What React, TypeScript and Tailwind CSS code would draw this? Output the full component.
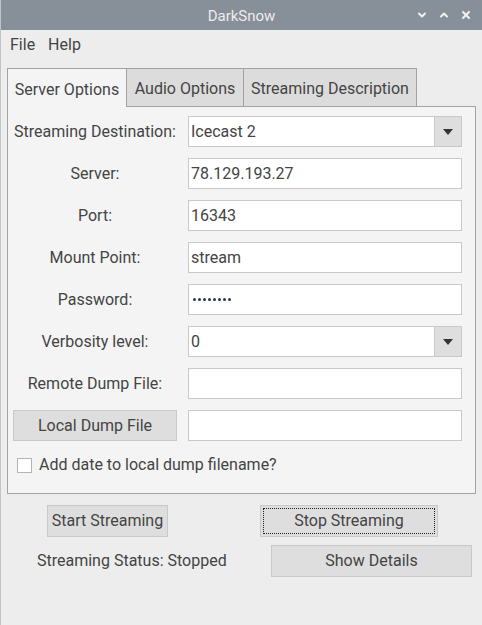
import { ChevronDown, ChevronUp, X } from "lucide-react";

const font = { fontFamily: "Roboto, 'Noto Sans', sans-serif" };

function Field({ label, value, password }: { label: string; value?: string; password?: boolean }) {
  return (
    <div className="flex h-[31px] items-center">
      <div className="w-[164px] whitespace-nowrap text-center">{label}</div>
      <div className="ml-[11px] flex h-full w-[274px] items-center border border-[#c9c9c9] bg-white px-[2px]">
        {password ? (
          <span className="flex gap-[2px] pl-[2px]">
            {Array.from({ length: 8 }).map((_, i) => (
              <span key={i} className="h-[3px] w-[3px] rounded-full bg-[#2c3550]" />
            ))}
          </span>
        ) : (
          value
        )}
      </div>
    </div>
  );
}

function Combo({ label, value }: { label: string; value: string }) {
  return (
    <div className="flex h-[31px] items-center">
      <div className="w-[164px] whitespace-nowrap text-center">{label}</div>
      <div className="ml-[11px] flex h-full w-[274px] items-stretch border border-[#c9c9c9] bg-white">
        <div className="flex flex-1 items-center px-[2px]">{value}</div>
        <div className="flex w-[27px] items-center justify-center border-l border-[#c9c9c9] bg-[#dedede]">
          <svg width="10" height="6" viewBox="0 0 10 6">
            <path d="M0 0h10L5 6z" fill="#333" />
          </svg>
        </div>
      </div>
    </div>
  );
}

export default function App() {
  return (
    <div
      className="flex h-[625px] w-[482px] flex-col border-l border-[#c3c3c3] bg-[#ededed] text-[16px] text-[#444]"
      style={font}
    >
      <div className="relative flex h-[30px] shrink-0 items-center justify-center bg-[#878f99] pt-[2px] text-[15px] text-[#ececec]">
        DarkSnow
        <div className="absolute right-[10px] top-0 flex h-full items-center gap-[10px]">
          <ChevronDown size={12} strokeWidth={4} color="#f2f2f2" />
          <ChevronUp size={12} strokeWidth={4} color="#f2f2f2" />
          <X size={12} strokeWidth={4} color="#f2f2f2" />
        </div>
      </div>

      <div className="flex h-[30px] items-center gap-[13px] pl-[9px]">
        <span>File</span>
        <span>Help</span>
      </div>

      <div className="ml-[6px] mt-[8px] flex h-[39px] items-stretch">
        <div className="relative z-10 flex w-[120px] items-center justify-center border border-b-0 border-[#a3a3a3] bg-[#f4f4f4] pt-[3px]">
          Server Options
        </div>
        <div className="flex w-[117px] items-center justify-center border border-l-0 border-[#a3a3a3] bg-[#dcdcdc] pt-[3px]">
          Audio Options
        </div>
        <div className="flex w-[173px] items-center justify-center border border-l-0 border-[#a3a3a3] bg-[#dcdcdc] pt-[3px]">
          Streaming Description
        </div>
      </div>

      <div className="-mt-px ml-[6px] flex h-[388px] w-[469px] flex-col gap-[11px] border border-[#a3a3a3] bg-[#f4f4f4] pl-[5px] pt-[9px]">
        <Combo label="Streaming Destination:" value="Icecast 2" />
        <Field label="Server:" value="78.129.193.27" />
        <Field label="Port:" value="16343" />
        <Field label="Mount Point:" value="stream" />
        <Field label="Password:" password />
        <Combo label="Verbosity level:" value="0" />
        <Field label="Remote Dump File:" value="" />
        <div className="flex h-[31px] items-center">
          <button className="flex h-full w-[164px] items-center justify-center border border-[#c9c9c9] bg-[#dedede]">
            Local Dump File
          </button>
          <div className="ml-[11px] h-full w-[274px] border border-[#c9c9c9] bg-white" />
        </div>
        <div className="flex items-center pl-[4px] pt-[1px]">
          <div className="h-[15px] w-[15px] border border-[#b5b5b5] bg-white" />
          <span className="ml-[7px]">Add date to local dump filename?</span>
        </div>
      </div>

      <div className="mt-[11px] flex h-[32px] items-stretch">
        <button className="ml-[46px] flex w-[121px] items-center justify-center border border-[#c9c9c9] bg-[#dedede]">
          Start Streaming
        </button>
        <button className="ml-[92px] flex w-[178px] items-center justify-center border border-[#c9c9c9] bg-[#dedede] p-[2px]">
          <span className="flex h-full w-full items-center justify-center border border-dotted border-[#222]">
            Stop Streaming
          </span>
        </button>
      </div>

      <div className="mt-[8px] flex h-[32px] items-center">
        <span className="ml-[36px] w-[188px] whitespace-nowrap text-center">Streaming Status: Stopped</span>
        <button className="ml-[46px] flex h-full w-[201px] items-center justify-center border border-[#c9c9c9] bg-[#dedede]">
          Show Details
        </button>
      </div>
    </div>
  );
}
